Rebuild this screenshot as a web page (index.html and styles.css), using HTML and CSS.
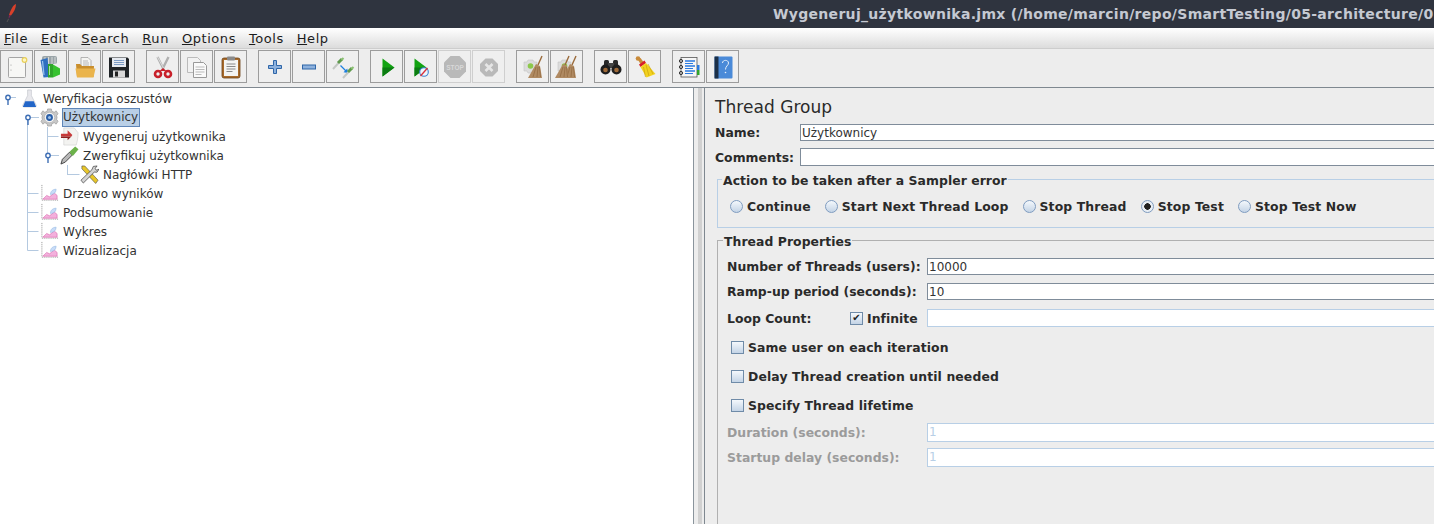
FILE: index.html
```html
<!DOCTYPE html>
<html lang="en">
<head>
    <meta charset="UTF-8">
    <meta name="viewport" content="width=device-width, initial-scale=1.0">
    <title>Wygeneruj_użytkownika.jmx</title>
    <link rel="stylesheet" href="styles.css">
</head>
<body>
    <div id="titlebar">
        <svg class="feather" width="14" height="24" viewBox="0 0 14 24">
            <path d="M11 4 C8 5 6 9 4 15 L6 15.500 C9 12 11 8 11 4Z" fill="#d8402a"/>
            <path d="M4 15 L6 15.500 L3.500 19Z" fill="#7a2a55"/>
            <path d="M3.500 19 L2 22" stroke="#555" stroke-width="1"/>
        </svg>
        <span class="title-text">Wygeneruj_użytkownika.jmx (/home/marcin/repo/SmartTesting/05-architecture/0</span>
    </div>

    <div id="menubar">
        <span><u>F</u>ile</span>
        <span><u>E</u>dit</span>
        <span><u>S</u>earch</span>
        <span><u>R</u>un</span>
        <span><u>O</u>ptions</span>
        <span><u>T</u>ools</span>
        <span><u>H</u>elp</span>
    </div>

    <div id="toolbar">
        <div class="tool-group">
            <button class="tool"><svg viewBox="0 0 24 24"><rect x="3.500" y="2.500" width="17" height="20" rx="1" fill="#f7f7f5" stroke="#a5a5a5"/><circle cx="6" cy="10" r=".6" fill="#999"/><circle cx="6" cy="15" r=".6" fill="#999"/><circle cx="19.500" cy="5" r="2.300" fill="#fff6c0" stroke="#e8cf5a" stroke-width="1.200"/></svg></button>
            <button class="tool"><svg viewBox="0 0 24 24"><rect x="3" y="1" width="15" height="8" rx="2" fill="#9aa4a8"/><path d="M6 2v7M9.500 2v7M13 2v7M16 2v7" stroke="#d5d8d8"/><path d="M1.500 5l7-2 2 19-6 .5Z" fill="#2f6fc0"/><path d="M3.500 6l1.500 14" stroke="#9cc4ee" stroke-width="1.200"/><rect x="9" y="9" width="5" height="13.500" fill="#2fa52a"/><path d="M14 9.500l7 4v6l-7 3Z" fill="#37c22f"/><path d="M10.500 11v9" stroke="#a5e6a0"/></svg></button>
            <button class="tool"><svg viewBox="0 0 24 24"><path d="M8 2.500h7l3 3v9H8Z" fill="#f4f4f2" stroke="#9a9a9a" stroke-width=".7"/><path d="M10 6h5M10 8h6M10 10h6" stroke="#aaa" stroke-width=".8"/><path d="M3 9h4l2 2h12l-.5 11H4Z" fill="#c98e2c"/><path d="M2.500 13.500h20L20.500 22.500H4Z" fill="#eab44c"/></svg></button>
            <button class="tool"><svg viewBox="0 0 24 24"><path d="M2 2.500h18.500l1.500 1.500v18.500H2Z" fill="#1f2326"/><rect x="5" y="3" width="14" height="9" fill="#e6eaf0"/><path d="M7 5.500h10M7 7.500h10M7 9.500h10" stroke="#7d9cc5"/><rect x="6" y="15.500" width="12" height="7" fill="#d8d8d8"/><rect x="8" y="16.500" width="3" height="5" fill="#222"/></svg></button>
        </div>
        <div class="tool-group">
            <button class="tool"><svg viewBox="0 0 24 24"><path d="M6.500 2l6 12M17.500 2l-6 12" stroke="#b0b0b0" stroke-width="2.400"/><path d="M6.500 2l6 11" stroke="#eee" stroke-width=".7"/><circle cx="7" cy="19" r="3" fill="none" stroke="#c8202a" stroke-width="2.600"/><circle cx="17" cy="19" r="3" fill="none" stroke="#c8202a" stroke-width="2.600"/><path d="M8.500 16l3.500-3 3.500 3" fill="#c8202a"/></svg></button>
            <button class="tool"><svg viewBox="0 0 24 24"><path d="M2.500 2.500h10l3 3v12h-13Z" fill="#f2f2f2" stroke="#bbb"/><path d="M8.500 7.500h10l3 3v12h-13Z" fill="#fafafa" stroke="#999"/><path d="M10.500 12h9M10.500 14.500h9M10.500 17h9M10.500 19.500h6" stroke="#bbb"/></svg></button>
            <button class="tool"><svg viewBox="0 0 24 24"><rect x="3" y="3" width="18" height="20" rx="2" fill="#a86a2a" stroke="#6c4216" stroke-width=".8"/><rect x="5" y="5" width="14" height="16" fill="#f4f4f2"/><rect x="8" y="1.500" width="8" height="4" rx="1" fill="#8a8a8a"/><path d="M7.500 9h9M7.500 11.500h9M7.500 14h9M7.500 16.500h6" stroke="#888"/></svg></button>
        </div>
        <div class="tool-group">
            <button class="tool"><svg viewBox="0 0 24 24"><path d="M10.500 5.500h3v5h5v3h-5v5h-3v-5h-5v-3h5Z" fill="#8db1dd" stroke="#2f66a8" stroke-width="1"/></svg></button>
            <button class="tool"><svg viewBox="0 0 24 24"><rect x="5.500" y="10" width="13" height="4" fill="#8db1dd" stroke="#2f66a8"/></svg></button>
            <button class="tool"><svg viewBox="0 0 24 24"><use href="#dropper"/><path d="M9.500 10.500l5.500 5.500" stroke="#1e7fe0" stroke-width="1.300"/><path d="M17 18l-4.500-.7 3.800-3.800Z" fill="#1e7fe0"/><use href="#dropper" x="10" y="9"/></svg></button>
        </div>
        <div class="tool-group">
            <button class="tool"><svg viewBox="0 0 24 24"><path d="M7.500 3.500l12 9-12 9Z" fill="#12a312"/><path d="M7.500 12.500h12l-12 9Z" fill="#0b7d12"/></svg></button>
            <button class="tool"><svg viewBox="0 0 24 24"><path d="M5.500 3.500l12 9-12 9Z" fill="#12a312"/><path d="M5.500 12.500h12l-12 9Z" fill="#0b7d12"/><circle cx="15" cy="17" r="4.300" fill="#eef5fc" stroke="#3a80d0" stroke-width="1.100"/><path d="M11.500 21l7-8" stroke="#d8303a" stroke-width="1.400"/></svg></button>
            <button class="tool off"><svg viewBox="0 0 24 24"><path d="M7.500 1h9L23 7.500v9L16.500 23h-9L1 16.500v-9Z" fill="#b9b9b9"/><text x="12" y="15" text-anchor="middle" class="stop-text">STOP</text></svg></button>
            <button class="tool off"><svg viewBox="0 0 24 24"><path d="M8.500 3.500h7l5.500 5.500v7l-5.500 5.500h-7L3 16V9Z" fill="#b9b9b9"/><path d="M8.500 9l7 7M15.500 9l-7 7" stroke="#e6e6e6" stroke-width="2.600"/></svg></button>
        </div>
        <div class="tool-group">
            <button class="tool"><svg viewBox="0 0 24 24"><use href="#gear-small"/><use href="#straw"/></svg></button>
            <button class="tool"><svg viewBox="0 0 24 24"><use href="#gear-small"/><use href="#straw"/><use href="#straw" x="-7"/></svg></button>
        </div>
        <div class="tool-group">
            <button class="tool"><svg viewBox="0 0 24 24"><rect x="5" y="5" width="5" height="8" rx="1.500" fill="#2a2a2a"/><rect x="14" y="5" width="5" height="8" rx="1.500" fill="#2a2a2a"/><rect x="9" y="8" width="6" height="5" fill="#444"/><circle cx="6.500" cy="14.500" r="5" fill="#1e1e1e"/><circle cx="17.500" cy="14.500" r="5" fill="#1e1e1e"/><circle cx="6.500" cy="15" r="2.300" fill="#a06a38"/><circle cx="17.500" cy="15" r="2.300" fill="#a06a38"/></svg></button>
            <button class="tool"><svg viewBox="0 0 24 24"><circle cx="5" cy="3.500" r="2.300" fill="#c98b3a"/><path d="M4.500 4l3 5 3-2-3-4Z" fill="#c98b3a"/><path d="M6 9.500l5.500-4 1.500 2.500-5.500 4Z" fill="#d8202a"/><path d="M7.500 12l5.500-4 9.500 11-9 3.500Z" fill="#f2d21e"/><path d="M13 10l3 11M10.500 12l2 10M15 9l5 10" stroke="#c8a210" stroke-width=".7"/></svg></button>
        </div>
        <div class="tool-group">
            <button class="tool"><svg viewBox="0 0 24 24"><rect x="4" y="2.500" width="16" height="19.500" fill="#f6f6f6" stroke="#555" stroke-width=".8"/><path d="M8 6h10M8 11h10M8 16h10" stroke="#2a7ae0" stroke-width="1.300"/><path d="M8 8.500h8M8 13.500h8M8 18.500h8" stroke="#2a7ae0"/><circle cx="4" cy="6" r="1.600" fill="none" stroke="#333"/><circle cx="4" cy="12" r="1.600" fill="none" stroke="#333"/><circle cx="4" cy="18" r="1.600" fill="none" stroke="#333"/><rect x="20" y="10" width="2.500" height="5" fill="#2a7ae0"/><rect x="20" y="15" width="2.500" height="5" fill="#2fa52a"/></svg></button>
            <button class="tool"><svg viewBox="0 0 24 24"><rect x="3.500" y="1.500" width="18" height="22" rx="1" fill="#4a8ad8"/><rect x="3.500" y="1.500" width="4" height="22" fill="#1c3048"/><path d="M11.500 8c0-3.500 6-3.500 6 0 0 2.500-3 3-3 6.500" fill="none" stroke="#e6f0fb" stroke-width="1"/><circle cx="14.500" cy="17.500" r=".8" fill="#e6f0fb"/></svg></button>
        </div>
    </div>

    <svg class="defs" width="0" height="0">
        <defs>
            <g id="dropper"><path d="M2 14l5.500-6" stroke="#c4c8c4" stroke-width="2"/><path d="M7 8l4-4" stroke="#5f9a4e" stroke-width="3"/><path d="M10.500 5l2-2" stroke="#8ac070" stroke-width="2"/></g>
            <g id="gear-small"><path d="M3 7h3l1-2h5l1 2h3v9h-3l-1 2H7l-1-2H3Z" fill="#dcdcdc" stroke="#c4c4c4" stroke-width=".6"/><circle cx="9.500" cy="11" r="2.800" fill="#8cc84b"/></g>
            <g id="straw"><path d="M21 1l-4 9" stroke="#9a6a3a" stroke-width="1.400"/><path d="M15 9l4 2 2 12H7Z" fill="#b08a62"/><path d="M15 12l-3 10M17 12l-1 10M18.500 12l1 10" stroke="#8a6238" stroke-width=".6"/></g>
            <g id="graph-icon"><path d="M2 1v16h17" fill="none" stroke="#8f8f8f" stroke-width="1" stroke-dasharray="1 1"/><path d="M3 16l4-4 3 1.500 5-4 3 2.500v4Z" fill="#f3b0dc" stroke="#d860a8" stroke-width=".6"/><path d="M11 11c0-4 3-5.500 6-5.500 0 3-2 5.500-6 5.500Z" fill="#c8dcf8" stroke="#86aede" stroke-width=".5"/></g>
        </defs>
    </svg>

    <div id="main">
        <div id="tree">
            <svg class="tree-lines" width="100" height="180">
                <g fill="none" stroke="#b4c9e0">
                    <path d="M8 9.500h8M27.500 29.500v133M28 29.500h11M27.500 105.500h11M27.500 124.500h11M27.500 143.500h11M27.500 162.500h11M47.500 39v29M47.500 48.500h11M48 67.500h11M67.500 77v10M67.500 86.500h12"/>
                </g>
                <g fill="#fff" stroke="#3f6fb5" stroke-width="1.400">
                    <circle cx="8" cy="9.500" r="2.200"/><circle cx="28" cy="29.500" r="2.200"/><circle cx="48" cy="67.500" r="2.200"/>
                </g>
                <path d="M8 12v5M28 32v5M48 70v5" stroke="#3f6fb5" stroke-width="1.400"/>
            </svg>
            <div class="node lv0">
                <svg class="node-icon" viewBox="0 0 18 20"><path d="M7 1h4v6l5 10c.5 1-.5 2-1 2H3c-.5 0-1.500-1-1-2l5-10Z" fill="#e8e8ec" stroke="#b9bcc4" stroke-width=".6"/><path d="M4.500 13h9l2.500 6H2Z" fill="#2366c8"/></svg>
                <span class="node-label">Weryfikacja oszustów</span>
            </div>
            <div class="node lv1">
                <svg class="node-icon" viewBox="0 0 20 20"><path d="M8 1h4l.5 2.500 2.500 1 2-1.500 2 3-1.500 2 .5 2-.5 2 1.500 2-2 3-2-1.500-2.500 1L12 19H8l-.5-2.500-2.500-1-2 1.500-2-3L2.500 12 2 10l.5-2L1 6l2-3 2 1.500 2.500-1Z" fill="#c8c8c8" stroke="#8e8e8e" stroke-width=".6"/><circle cx="10" cy="10" r="5.500" fill="#f4f4f4" stroke="#999" stroke-width=".5"/><circle cx="10" cy="10" r="3.600" fill="#2a5fa8"/><circle cx="10" cy="10" r="1.600" fill="#9cc0ea"/></svg>
                <span class="node-label selected">Użytkownicy</span>
            </div>
            <div class="node lv2">
                <svg class="node-icon" viewBox="0 0 20 20"><path d="M4 1h11l4 5c0 6-1 10-2 13H4Z" fill="#f3f3f1" stroke="#ccc" stroke-width=".6"/><path d="M1 7h7V3.500l5 5-1 1.500H1Z" fill="#c83a3a"/><path d="M1 10h11l-4 4v-2.500H1Z" fill="#8e2020"/></svg>
                <span class="node-label">Wygeneruj użytkownika</span>
            </div>
            <div class="node lv2">
                <svg class="node-icon" viewBox="0 0 20 20"><path d="M1 19l1.500-5L10 6.500l3 3L5.500 17Z" fill="#b8b8b8" stroke="#333" stroke-width=".9"/><path d="M10 6l6-5.500 3.500 3L14 10l-1.500 0Z" fill="#6cb24a"/></svg>
                <span class="node-label">Zweryfikuj użytkownika</span>
            </div>
            <div class="node lv3">
                <svg class="node-icon" viewBox="0 0 20 20"><path d="M2 1l3 0 14 15-2.500 3.500L2 4Z" fill="#e8c62a" stroke="#444" stroke-width=".6"/><path d="M18 1l-4 .5-1.500 3.500L1 16l2.500 3L15 7.500l3 0 2-3-3 1-1-2Z" fill="#d4d4d4" stroke="#333" stroke-width=".7"/></svg>
                <span class="node-label">Nagłówki HTTP</span>
            </div>
            <div class="node lv1"><svg class="node-icon" viewBox="0 0 20 20"><use href="#graph-icon"/></svg><span class="node-label">Drzewo wyników</span></div>
            <div class="node lv1"><svg class="node-icon" viewBox="0 0 20 20"><use href="#graph-icon"/></svg><span class="node-label">Podsumowanie</span></div>
            <div class="node lv1"><svg class="node-icon" viewBox="0 0 20 20"><use href="#graph-icon"/></svg><span class="node-label">Wykres</span></div>
            <div class="node lv1"><svg class="node-icon" viewBox="0 0 20 20"><use href="#graph-icon"/></svg><span class="node-label">Wizualizacja</span></div>
        </div>

        <div id="splitter"></div>

        <div id="panel">
            <h2 class="panel-title">Thread Group</h2>
            <div class="name-row">
                <label>Name:</label>
                <div class="field dark">Użytkownicy</div>
            </div>
            <div class="name-row comments">
                <label>Comments:</label>
                <div class="field dark"></div>
            </div>

            <fieldset class="box error-box">
                <legend>Action to be taken after a Sampler error</legend>
                <div class="radios">
                    <span class="choice"><i class="radio"></i>Continue</span>
                    <span class="choice"><i class="radio"></i>Start Next Thread Loop</span>
                    <span class="choice"><i class="radio"></i>Stop Thread</span>
                    <span class="choice"><i class="radio on"></i>Stop Test</span>
                    <span class="choice"><i class="radio"></i>Stop Test Now</span>
                </div>
            </fieldset>

            <fieldset class="box props-box">
                <legend>Thread Properties</legend>
                <div class="prop first"><label>Number of Threads (users):</label><div class="field dark">10000</div></div>
                <div class="prop"><label>Ramp-up period (seconds):</label><div class="field dark">10</div></div>
                <div class="prop loop">
                    <label class="loop-label">Loop Count:</label>
                    <span class="choice infinite"><i class="check on">&#10004;</i>Infinite</span>
                    <div class="field light"></div>
                </div>
                <div class="option"><i class="check"></i>Same user on each iteration</div>
                <div class="option"><i class="check"></i>Delay Thread creation until needed</div>
                <div class="option"><i class="check"></i>Specify Thread lifetime</div>
                <div class="prop off-row first-off"><label>Duration (seconds):</label><div class="field light">1</div></div>
                <div class="prop off-row"><label>Startup delay (seconds):</label><div class="field light">1</div></div>
            </fieldset>
        </div>
    </div>
</body>
</html>
```

FILE: styles.css
```css
html, body {
    margin: 0;
    padding: 0;
    height: 524px;
    overflow: hidden;
}
body {
    width: 1434px;
    font-family: "DejaVu Sans", sans-serif;
    font-size: 13px;
    background-color: #ededed;
    color: #222;
}
#titlebar {
    height: 28px;
    background-color: #2f343f;
    display: flex;
    align-items: center;
    overflow: hidden;
    white-space: nowrap;
}
.feather {
    margin-left: 5px;
    margin-top: -4px;
    flex: none;
}
.title-text {
    margin-left: 754px;
    color: #c5c9d2;
    font-weight: bold;
    font-size: 14px;
    letter-spacing: .31px;
}
#menubar {
    height: 20px;
    display: flex;
    gap: 13px;
    padding-left: 4px;
    align-items: center;
    background: linear-gradient(#ffffff, #dcdcdc);
    font-size: 13px;
    color: #1c1c1c;
    letter-spacing: .55px;
}
#toolbar {
    height: 38px;
    display: flex;
    gap: 11px;
    border-top: 1px solid #cdcdcd;
    border-bottom: 1px solid #7f8890;
    align-items: flex-start;
}
.tool-group {
    display: flex;
    gap: 1px;
    margin-top: 1px;
}
.tool {
    width: 33px;
    height: 33px;
    padding: 0;
    border: 1px solid #9c9c9c;
    background-color: #efefef;
    display: flex;
    align-items: center;
    justify-content: center;
}
.tool svg {
    width: 24px;
    height: 24px;
    display: block;
}
.tool.off {
    border-color: #cfcfcf;
}
.stop-text {
    font-size: 6.500px;
    font-weight: bold;
    fill: #d8d8d8;
}
.defs {
    position: absolute;
}
#main {
    display: flex;
    height: 436px;
}
#tree {
    position: relative;
    width: 693px;
    flex: none;
    background-color: #fff;
    border-right: 1px solid #8a949c;
    padding-top: 1px;
    color: #333;
    font-size: 12px;
}
.tree-lines {
    position: absolute;
    left: 0;
    top: 0;
}
.node {
    height: 19px;
    display: flex;
    align-items: center;
    gap: 3px;
    position: relative;
}
.lv0 { padding-left: 20px; }
.lv1 { padding-left: 40px; }
.lv2 { padding-left: 60px; }
.lv3 { padding-left: 80px; }
.node-icon {
    width: 19px;
    height: 19px;
    flex: none;
}
.node-label {
    padding: 0 1px;
}
.node-label.selected {
    background-color: #b9cfe6;
    outline: 1px solid #5f86b8;
    outline-offset: -1px;
    line-height: 19px;
    padding: 0 2px 0 1px;
}
#splitter {
    width: 4px;
    padding: 0 2px 0 4px;
    flex: none;
    background-color: #ededed;
    background-image: radial-gradient(#b0b0b0 .6px, transparent .8px);
    background-size: 2px 2px;
    background-origin: content-box;
    background-clip: content-box;
}
#panel {
    flex: 1;
    min-width: 0;
    border-left: 1px solid #7f8890;
    padding-left: 10px;
    overflow: hidden;
    font-weight: bold;
    font-size: 12.400px;
    letter-spacing: .02px;
    color: #2a2a2a;
}
.panel-title {
    margin: 9px 0 0;
    font-size: 17px;
    font-weight: normal;
    line-height: 21px;
    letter-spacing: .05px;
}
.name-row {
    display: flex;
    align-items: center;
    margin-top: 6px;
}
.name-row.comments {
    margin-top: 7px;
}
.name-row label {
    width: 85px;
    flex: none;
}
.field {
    flex: 1;
    min-width: 0;
    height: 17px;
    background-color: #fff;
    box-sizing: border-box;
    font-size: 12px;
    font-weight: normal;
    line-height: 16px;
    padding-left: 1px;
    letter-spacing: 0;
    color: #333;
}
.field.dark {
    border: 1px solid #7f8c9a;
    border-right: none;
}
.comments .field.dark {
    height: 18px;
}
.field.light {
    height: 19px;
    border: 1px solid #b8cfe6;
    border-right: none;
    color: #b8cfe6;
    line-height: 17px;
}
.box {
    margin: 0 0 0 2px;
    padding: 0;
    min-width: 0;
    box-sizing: border-box;
}
.box legend {
    padding: 2px 1px 0;
    margin-left: 4px;
    line-height: 15px;
    letter-spacing: .06px;
}
.error-box {
    margin-top: 5px;
    height: 57px;
    border: 1px solid #b8cfe6;
    border-right: none;
}
.radios {
    display: flex;
    align-items: center;
    gap: 14px;
    padding: 11px 0 0 12px;
    line-height: 15px;
    letter-spacing: .14px;
}
.choice {
    display: inline-flex;
    align-items: center;
    gap: 4px;
    white-space: nowrap;
}
.radio {
    width: 11px;
    height: 11px;
    border: 1px solid #7f9cc0;
    border-radius: 50%;
    background: linear-gradient(#f4f8fc, #c4d4e6);
    flex: none;
}
.radio.on {
    background: radial-gradient(circle, #222 0 3px, #e8eef4 3.500px);
}
.props-box {
    margin-top: 4px;
    height: 320px;
    border: 1px solid #b0b0b0;
    border-right: none;
    border-bottom: none;
}
.props-box legend {
    margin-left: 5px;
}
.prop {
    display: flex;
    align-items: center;
    height: 17px;
    margin: 8px 0 0 9px;
}
.prop.first {
    margin-top: 9px;
}
.prop label {
    width: 200px;
    flex: none;
}
.prop.loop {
    height: 18px;
    margin-top: 9px;
}
.prop.loop .field.light {
    height: 18px;
}
.prop .loop-label {
    width: 123px;
}
.infinite {
    width: 77px;
    flex: none;
}
.check {
    width: 11px;
    height: 11px;
    border: 1px solid #6f8ba8;
    background: linear-gradient(#f4f8fc, #c4d4e6);
    display: inline-flex;
    align-items: center;
    justify-content: center;
    font-style: normal;
    font-size: 10px;
    color: #222;
    flex: none;
    line-height: 1;
}
.option {
    display: flex;
    align-items: center;
    gap: 4px;
    margin: 11px 0 0 13px;
    height: 18px;
    letter-spacing: .12px;
}
.off-row {
    color: #9b9b9b;
    height: 19px;
    margin-top: 6px;
}
.off-row.first-off {
    margin-top: 9px;
}
```
